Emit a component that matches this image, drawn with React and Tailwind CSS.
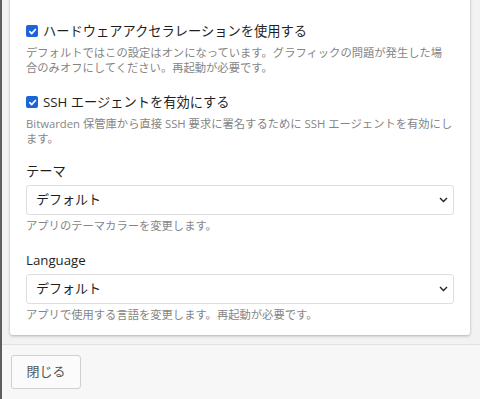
const font = { fontFamily: '"Open Sans", "Noto Sans CJK JP", sans-serif' };

const Checkbox = () => (
  <span className="flex h-[12px] w-[12px] shrink-0 items-center justify-center rounded-[2px] bg-[#1a66d6]">
    <svg width="9" height="9" viewBox="0 0 10 10" fill="none">
      <path d="M2 5.2 L4.1 7.3 L8.2 2.8" stroke="white" strokeWidth="1.9" strokeLinecap="round" strokeLinejoin="round" />
    </svg>
  </span>
);

const Chevron = () => (
  <svg width="9" height="6" viewBox="0 0 9 6" fill="none">
    <path d="M1 1 L4.5 4.5 L8 1" stroke="#222" strokeWidth="1.4" />
  </svg>
);

const CheckRow = ({ label, hint, className, hintClass = "" }) => (
  <div className={className}>
    <label className="flex items-center gap-[5px] text-[13.25px] leading-[20px] text-[#1f1f1f]">
      <Checkbox />
      <span>{label}</span>
    </label>
    <p className={`mt-1 text-[11.3px] leading-[15px] text-[#858585] ${hintClass}`}>{hint}</p>
  </div>
);

const SelectRow = ({ label, hint, className }) => (
  <div className={className}>
    <div className="text-[13.25px] leading-[20px] text-[#1f1f1f]">{label}</div>
    <div className="mt-1 flex h-[30px] items-center justify-between rounded-[3px] border border-[#dedede] bg-white pl-[9px] pr-[5px] text-[13px] text-[#1f1f1f]">
      <span>デフォルト</span>
      <Chevron />
    </div>
    <p className="mt-[3px] text-[11.3px] leading-[15px] text-[#858585]">{hint}</p>
  </div>
);

export default function App() {
  return (
    <div style={font} className="flex h-[399px] w-[480px] flex-col overflow-hidden border-l-2 border-[#5e5e5e] bg-[#f2f2f2]">
      <div className="min-h-0 flex-1 overflow-hidden pb-[9px] pl-2 pr-[10px]">
        <div className="-mt-[14px] rounded-b-[3px] bg-white px-4 pb-[13px] shadow-[0_1px_3px_rgba(0,0,0,0.28)]">
          <p className="text-[11.3px] leading-[15px] text-[#858585]">
            ブラウザ拡張機能との統合を許可する場合はオンにしてください。
          </p>
          <CheckRow
            className="mt-[20px]"
            hintClass="max-w-[424px]"
            label="ハードウェアアクセラレーションを使用する"
            hint="デフォルトではこの設定はオンになっています。グラフィックの問題が発生した場合のみオフにしてください。再起動が必要です。"
          />
          <CheckRow
            className="mt-[17px]"
            label="SSH エージェントを有効にする"
            hint="Bitwarden 保管庫から直接 SSH 要求に署名するために SSH エージェントを有効にします。"
          />
          <SelectRow className="mt-[15px]" label="テーマ" hint="アプリのテーマカラーを変更します。" />
          <SelectRow
            className="mt-[17px]"
            label="Language"
            hint="アプリで使用する言語を変更します。再起動が必要です。"
          />
        </div>
      </div>
      <div className="border-t border-[#e2e2e2] bg-[#f7f7f7] pb-[10px] pl-[9px] pt-[10px]">
        <button className="h-[34px] w-[70px] rounded-[3px] border border-[#d0d0d0] bg-[#fbfbfb] text-[13px] text-[#555]">
          閉じる
        </button>
      </div>
    </div>
  );
}
